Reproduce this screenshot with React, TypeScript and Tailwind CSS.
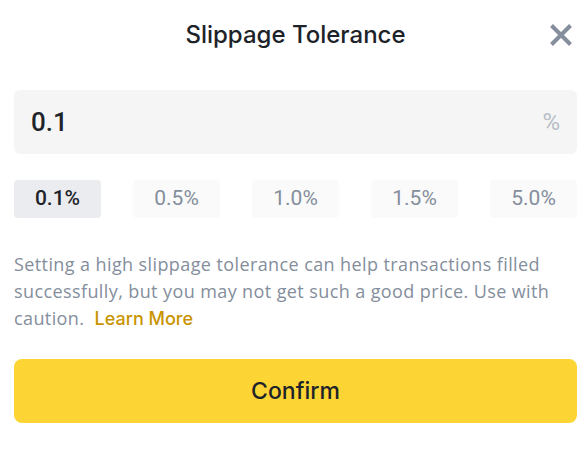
import React from "react";

const presets = ["0.1%", "0.5%", "1.0%", "1.5%", "5.0%"];

export default function App() {
  return (
    <div className="w-[588px] h-[469px] bg-white pl-[14px] pr-[11px] pt-[17px] font-['Open_Sans','Noto_Sans',sans-serif]">
      <div className="relative flex h-[36px] items-center justify-center">
        <h1 className="font-['Inter','Open_Sans',sans-serif] text-[24px] font-medium text-[#1e2329] leading-none">
          Slippage Tolerance
        </h1>
        <button className="absolute right-[4px] top-[6px] flex h-[24px] w-[24px] items-center justify-center">
          <svg width="24" height="24" viewBox="0 0 24 24">
            <path
              d="M2.5 2.5 L21.5 21.5 M21.5 2.5 L2.5 21.5"
              stroke="#848e9c"
              strokeWidth="4"
              strokeLinecap="butt"
            />
          </svg>
        </button>
      </div>

      <div className="mt-[37px] flex h-[64px] items-center justify-between rounded-[6px] bg-[#f5f5f5] px-[17px] font-['Roboto','Noto_Sans',sans-serif]">
        <span className="text-[26px] font-medium text-[#1e2329]">0.1</span>
        <span className="text-[24px] text-[#b7bdc6]">%</span>
      </div>

      <div className="mt-[26px] flex justify-between font-['Roboto','Noto_Sans',sans-serif]">
        {presets.map((p, i) => (
          <div
            key={p}
            className={
              i === 0
                ? "flex h-[38px] w-[87px] items-center justify-center rounded-[4px] bg-[#eaecef] text-[21px] font-medium text-[#1e2329]"
                : "flex h-[38px] w-[87px] items-center justify-center rounded-[4px] bg-[#fafafa] text-[21px] text-[#848e9c]"
            }
          >
            {p}
          </div>
        ))}
      </div>

      <p className="mt-[33px] text-[18px] leading-[27px] tracking-[0.4px] text-[#848e9c]">
        Setting a high slippage tolerance can help transactions filled
        <br />
        successfully, but you may not get such a good price. Use with
        <br />
        caution.&nbsp;&nbsp;
        <span className="font-['Inter','Open_Sans',sans-serif] font-medium tracking-normal text-[#c99400]">
          Learn More
        </span>
      </p>

      <button className="mt-[27px] flex h-[64px] w-full items-center justify-center rounded-[8px] bg-[#fcd535] font-['Inter','Open_Sans',sans-serif] text-[23px] font-medium text-[#1e2329]">
        Confirm
      </button>
    </div>
  );
}
